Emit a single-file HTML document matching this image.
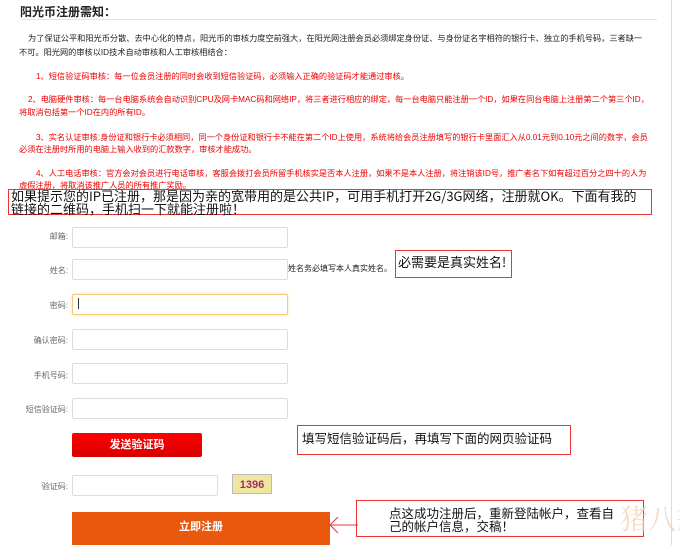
<!DOCTYPE html>
<html><head><meta charset="utf-8"><style>
body{margin:0;width:680px;height:545px;background:#fff;position:relative;overflow:hidden;font-family:"Liberation Sans","Noto Sans CJK SC",sans-serif;}
.a{position:absolute;white-space:nowrap}
.s{font-size:8.2px;color:#222}
.r{font-size:8.2px;color:#e00}
.lbl{position:absolute;font-size:8px;color:#666;text-align:right;width:60px;left:8px}
.in{position:absolute;left:72px;width:214px;height:19px;border:1px solid #ddd;border-radius:2px;background:#fff}
.box{position:absolute;border:1px solid #e33;font-family:"Noto Sans CJK SC","Liberation Sans",sans-serif;color:#111;white-space:nowrap}
</style></head><body>
<div style="position:absolute;left:671px;top:0;width:1px;height:545px;background:#ddd"></div>
<div class="a" style="left:20px;top:3px;font-size:12px;font-weight:bold;color:#222">阳光币注册需知：</div>
<div style="position:absolute;left:21px;top:19px;width:636px;height:1px;background:#e3e3e3"></div>
<div class="a s" style="left:28px;top:32px">为了保证公平和阳光币分散、去中心化的特点，阳光币的审核力度空前强大，在阳光网注册会员必须绑定身份证、与身份证名字相符的银行卡、独立的手机号码，三者缺一</div>
<div class="a s" style="left:19px;top:46px">不可。阳光网的审核以ID技术自动审核和人工审核相结合：</div>
<div class="a r" style="left:36px;top:70px">1、短信验证码审核：每一位会员注册的同时会收到短信验证码，必须输入正确的验证码才能通过审核。</div>
<div class="a r" style="left:28px;top:93px">2、电脑硬件审核：每一台电脑系统会自动识别CPU及网卡MAC码和网络IP，将三者进行相应的绑定，每一台电脑只能注册一个ID，如果在同台电脑上注册第二个第三个ID，</div>
<div class="a r" style="left:19px;top:106px">将取消包括第一个ID在内的所有ID。</div>
<div class="a r" style="left:36px;top:131px">3、实名认证审核:身份证和银行卡必须相同，同一个身份证和银行卡不能在第二个ID上使用，系统将给会员注册填写的银行卡里面汇入从0.01元到0.10元之间的数字，会员</div>
<div class="a r" style="left:19px;top:143px">必须在注册时所用的电脑上输入收到的汇款数字，审核才能成功。</div>
<div class="a r" style="left:36px;top:167px">4、人工电话审核：官方会对会员进行电话审核，客服会拨打会员所留手机核实是否本人注册，如果不是本人注册，将注销该ID号，推广者名下如有超过百分之四十的人为</div>
<div class="a r" style="left:19px;top:179px">虚假注册，将取消该推广人员的所有推广奖励。</div>
<div class="box" style="left:8px;top:189px;width:644px;height:26px;font-size:13px;line-height:12.5px;padding-left:2px;box-sizing:border-box">如果提示您的IP已注册，那是因为亲的宽带用的是公共IP，可用手机打开2G/3G网络，注册就OK。下面有我的<br>链接的二维码，手机扫一下就能注册啦！</div>
<div class="lbl" style="top:231px">邮箱:</div><div class="in" style="top:227px"></div>
<div class="lbl" style="top:265px">姓名:</div><div class="in" style="top:259px"></div>
<div class="a" style="left:288px;top:263px;font-size:8px;color:#222">姓名务必填写本人真实姓名。</div>
<div class="box" style="left:395px;top:250px;width:117px;height:28px;font-size:13px;line-height:14px;padding:4px 0 0 2px;box-sizing:border-box">必需要是真实姓名!</div>
<div class="lbl" style="top:300px">密码:</div><div class="in" style="top:294px;border-color:#f5c77a;box-shadow:0 0 3px #fde2b0"></div>
<div style="position:absolute;left:78px;top:298px;width:1px;height:11px;background:#333"></div>
<div class="lbl" style="top:335px">确认密码:</div><div class="in" style="top:329px"></div>
<div class="lbl" style="top:370px">手机号码:</div><div class="in" style="top:363px"></div>
<div class="lbl" style="top:404px">短信验证码:</div><div class="in" style="top:398px"></div>
<div style="position:absolute;left:72px;top:433px;width:130px;height:24px;background:linear-gradient(#f00,#d80000);border-radius:2px;color:#fff;font-size:11px;font-weight:bold;text-align:center;line-height:24px">发送验证码</div>
<div class="box" style="left:297px;top:425px;width:274px;height:30px;font-size:12.5px;line-height:14px;padding:5px 0 0 4px;box-sizing:border-box">填写短信验证码后，再填写下面的网页验证码</div>
<div class="lbl" style="top:481px">验证码:</div><div class="in" style="top:475px;width:144px"></div>
<div style="position:absolute;left:232px;top:474px;width:40px;height:20px;background:#efe6a0;border:1px solid #bbb;color:#a03060;font-size:11px;font-weight:bold;line-height:20px;text-align:center;box-sizing:border-box">1396</div>
<div style="position:absolute;left:72px;top:512px;width:258px;height:33px;background:#e8590f;color:#fff;font-size:11px;font-weight:bold;text-align:center;line-height:30px">立即注册</div>
<svg style="position:absolute;left:328px;top:512px" width="32" height="26"><path d="M2 13H30M2 13L10 5M2 13L10 21" stroke="#e33" stroke-width="1" fill="none"/></svg>
<div class="box" style="left:356px;top:500px;width:288px;height:37px;font-size:12.5px;line-height:13px;padding:5px 0 0 32px;box-sizing:border-box">点这成功注册后，重新登陆帐户，查看自<br>己的帐户信息，交稿！</div>
<div class="a" style="left:620px;top:498px;font-size:28px;color:#f4c9b0;opacity:.7;font-family:'Noto Serif CJK SC',serif">猪八戒</div>
</body></html>
